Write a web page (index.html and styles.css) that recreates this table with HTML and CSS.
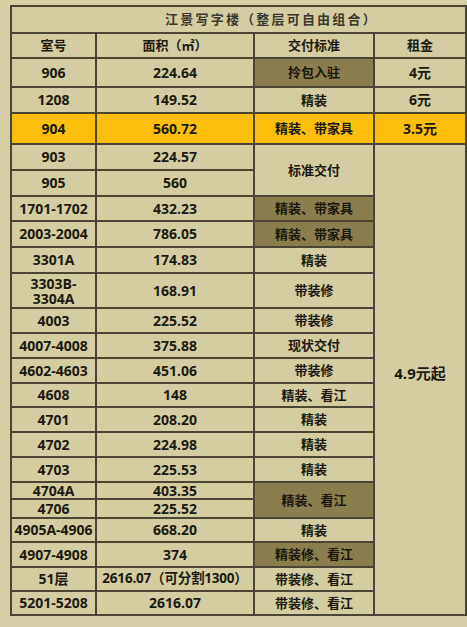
FILE: index.html
```html
<!DOCTYPE html>
<html lang="zh">
<head>
<meta charset="utf-8">
<link rel="stylesheet" href="styles.css">
</head>
<body>
<table class="sheet">
  <colgroup>
    <col class="c-room"><col class="c-area"><col class="c-std"><col class="c-rent">
  </colgroup>
  <tr class="h27"><td colspan="4" class="title">江景写字楼（整层可自由组合）</td></tr>
  <tr class="h25 head"><td>室号</td><td>面积（㎡）</td><td>交付标准</td><td>租金</td></tr>
  <tr class="h29"><td>906</td><td>224.64</td><td class="cn dark">拎包入驻</td><td>4元</td></tr>
  <tr class="h26"><td>1208</td><td>149.52</td><td class="cn">精装</td><td>6元</td></tr>
  <tr class="h31 hot"><td>904</td><td>560.72</td><td class="cn">精装、带家具</td><td>3.5元</td></tr>
  <tr class="h26"><td>903</td><td>224.57</td><td class="cn" rowspan="2">标准交付</td><td rowspan="19" class="big">4.9元起</td></tr>
  <tr class="h26"><td>905</td><td>560</td></tr>
  <tr class="h25"><td>1701-1702</td><td>432.23</td><td class="cn dark">精装、带家具</td></tr>
  <tr class="h26"><td>2003-2004</td><td>786.05</td><td class="cn dark">精装、带家具</td></tr>
  <tr class="h26"><td>3301A</td><td>174.83</td><td class="cn">精装</td></tr>
  <tr class="h35"><td class="two"><span class="ln">3303B-</span><span class="ln">3304A</span></td><td>168.91</td><td class="cn">带装修</td></tr>
  <tr class="h25"><td>4003</td><td>225.52</td><td class="cn">带装修</td></tr>
  <tr class="h25"><td>4007-4008</td><td>375.88</td><td class="cn">现状交付</td></tr>
  <tr class="h25"><td>4602-4603</td><td>451.06</td><td class="cn">带装修</td></tr>
  <tr class="h24"><td>4608</td><td>148</td><td class="cn">精装、看江</td></tr>
  <tr class="h25"><td>4701</td><td>208.20</td><td class="cn">精装</td></tr>
  <tr class="h25"><td>4702</td><td>224.98</td><td class="cn">精装</td></tr>
  <tr class="h25"><td>4703</td><td>225.53</td><td class="cn">精装</td></tr>
  <tr class="h17"><td>4704A</td><td>403.35</td><td class="cn dark" rowspan="2">精装、看江</td></tr>
  <tr class="h19"><td>4706</td><td>225.52</td></tr>
  <tr class="h24"><td>4905A-4906</td><td>668.20</td><td class="cn">精装</td></tr>
  <tr class="h25"><td>4907-4908</td><td>374</td><td class="cn dark">精装修、看江</td></tr>
  <tr class="h24"><td>51层</td><td class="split">2616.07（可分割1300）</td><td class="cn">带装修、看江</td></tr>
  <tr class="h24"><td>5201-5208</td><td>2616.07</td><td class="cn">带装修、看江</td></tr>
</table>
</body>
</html>
```
FILE: styles.css
```css
html, body {
  margin: 0;
  padding: 0;
  background: #d6cfa5;
}
body {
  padding: 5px 0 0 10px;
  font-family: "Open Sans", "Noto Sans CJK SC", sans-serif;
}
.sheet {
  border-collapse: collapse;
  table-layout: fixed;
  width: 455px;
  background: #d4cda2;
  color: #1c1a10;
  font-weight: 700;
  font-size: 14px;
}
.sheet td {
  border: 2px solid #4a4535;
  padding: 0;
  text-align: center;
  vertical-align: middle;
  line-height: 1;
  white-space: nowrap;
  overflow: hidden;
}
.c-room { width: 85px; }
.c-area { width: 158px; }
.c-std { width: 120px; }
.c-rent { width: 92px; }

.h17 { height: 17px; }
.h19 { height: 19px; }
.h24 { height: 24px; }
.h25 { height: 25px; }
.h26 { height: 26px; }
.h27 { height: 27px; }
.h29 { height: 29px; }
.h31 { height: 31px; }
.h35 { height: 35px; }

.sheet td.title {
  font-size: 13px;
  letter-spacing: 2.2px;
  color: #3a382e;
  padding-left: 66px;
}
.head td {
  font-size: 13px;
}
.sheet td.cn {
  font-size: 13px;
}
.sheet td.dark {
  background: #8a7e4d;
  color: #1a170b;
}
.hot td {
  background: #fbbf0b;
}
.ln {
  display: block;
  height: 15px;
  line-height: 15px;
}
.sheet td.split {
  font-size: 13.5px;
  letter-spacing: -0.2px;
}
.sheet td.big {
  font-size: 15px;
  vertical-align: middle;
  padding-bottom: 12px;
}
```
